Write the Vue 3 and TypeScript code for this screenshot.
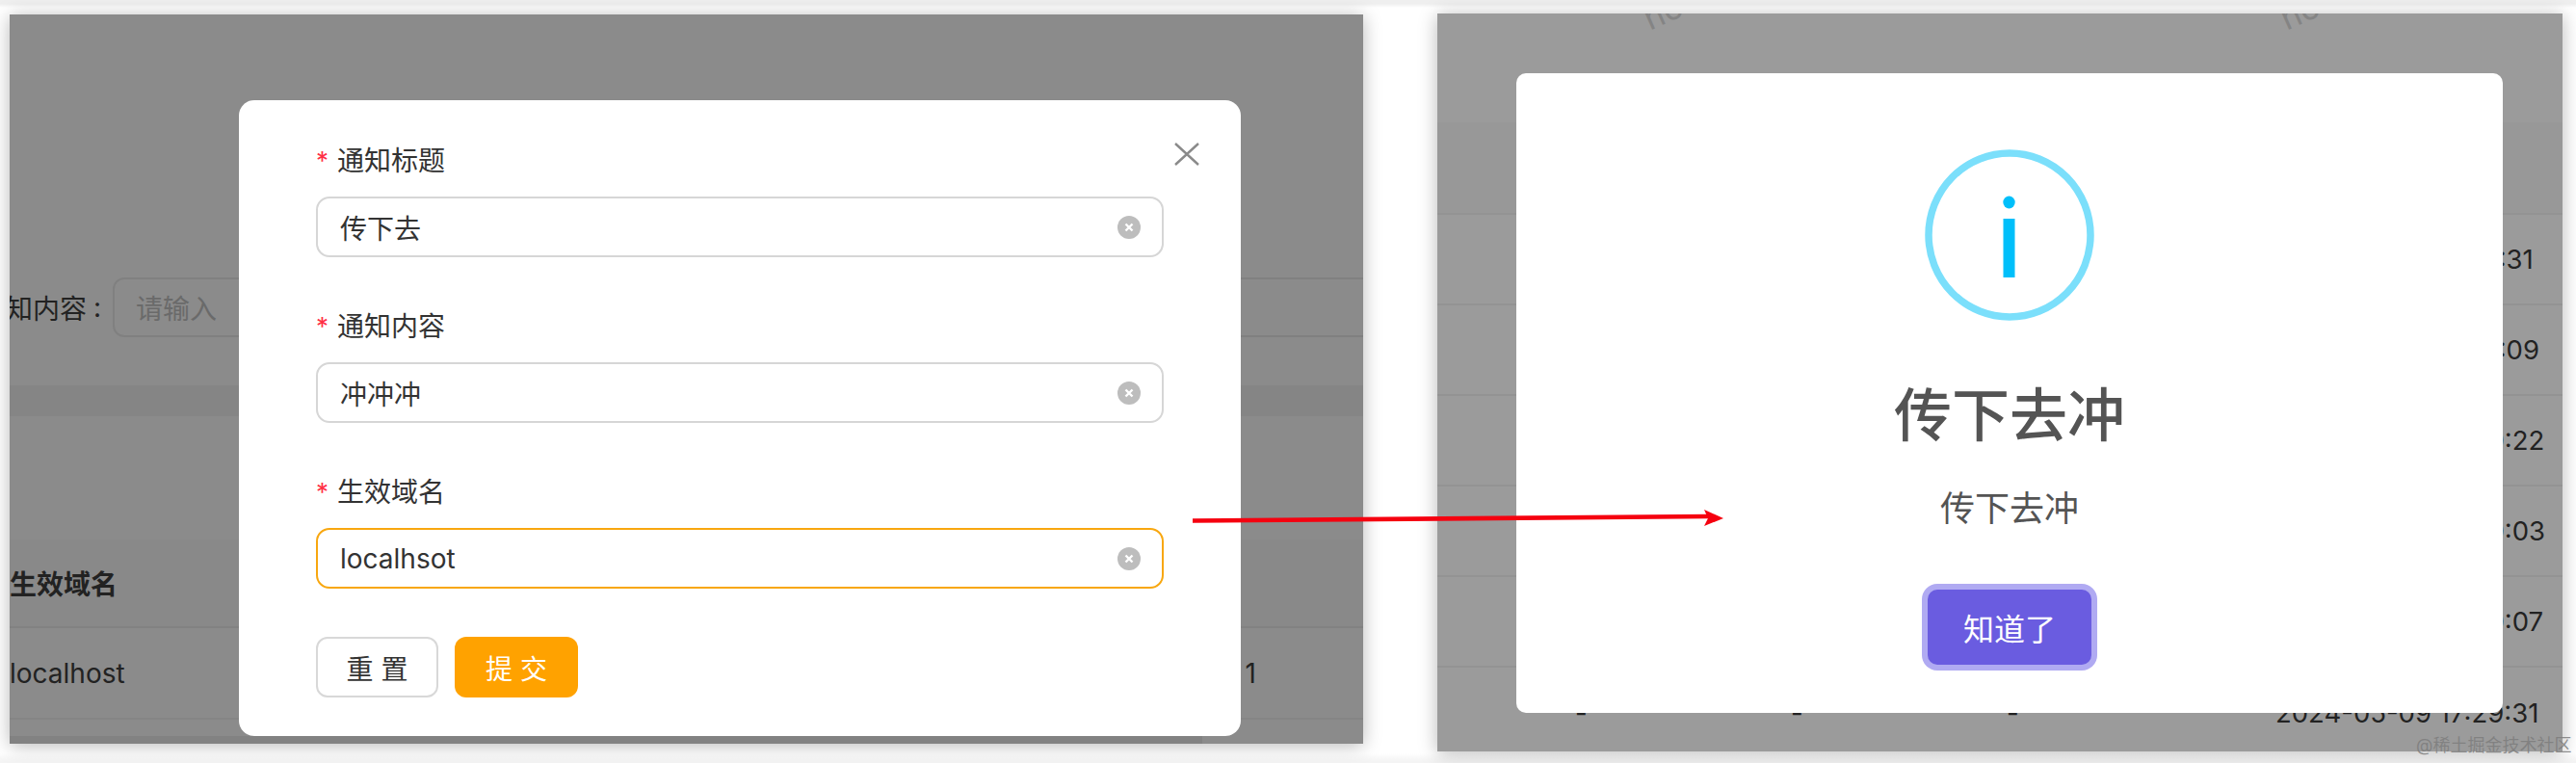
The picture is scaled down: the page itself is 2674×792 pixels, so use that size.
<script setup lang="ts">
interface Field {
  label: string
  value: string
  focused: boolean
}

const fields: Field[] = [
  { label: '通知标题', value: '传下去', focused: false },
  { label: '通知内容', value: '冲冲冲', focused: false },
  { label: '生效域名', value: 'localhsot', focused: true },
]

const times: string[] = [
  '2024-05-09 17:31:31',
  '2024-05-09 17:31:09',
  '2024-05-09 17:30:22',
  '2024-05-09 17:30:03',
  '2024-05-09 17:30:07',
]
</script>

<template>
  <div class="page">
    <section class="panel panel-left">
      <div class="filter-row">
        <span class="filter-label"><span class="filter-label-text">通知内容</span></span>
        <span class="filter-colon">:</span>
        <div class="filter-input">请输入</div>
      </div>
      <div class="band"></div>
      <div class="table-head"><span>生效域名</span></div>
      <div class="table-row">
        <span>localhost</span>
        <span>1</span>
      </div>
      <div class="foot-strip"></div>

      <div class="form-modal">
        <svg class="close" viewBox="0 0 26 24" width="26" height="24" aria-hidden="true">
          <path d="M1 1 L25 23 M25 1 L1 23" stroke="#8a8a8a" stroke-width="2.4" fill="none" />
        </svg>
        <div v-for="f in fields" :key="f.label" class="field">
          <div class="field-label"><span class="required">*</span>{{ f.label }}</div>
          <div class="input" :class="{ focused: f.focused }">
            <span>{{ f.value }}</span>
            <svg class="clear" viewBox="0 0 24 24" width="24" height="24" aria-hidden="true">
              <circle cx="12" cy="12" r="12" fill="#bdbdbd" />
              <path d="M8.5 8.5 L15.5 15.5 M15.5 8.5 L8.5 15.5" stroke="#fff" stroke-width="2.4" />
            </svg>
          </div>
        </div>
        <div class="actions">
          <div class="btn btn-reset">重 置</div>
          <div class="btn btn-submit">提 交</div>
        </div>
      </div>
    </section>

    <section class="panel panel-right">
      <span class="ghost ghost-a">hosts</span>
      <span class="ghost ghost-b">hosts</span>
      <div class="rows-head"></div>
      <div v-for="t in times" :key="t" class="time-row"><span>{{ t }}</span></div>
      <div class="last-row">
        <span>-</span>
        <span>-</span>
        <span>-</span>
        <span>2024-05-09 17:29:31</span>
      </div>

      <div class="alert-modal">
        <svg class="info" viewBox="0 0 176 178" width="176" height="178" aria-hidden="true">
          <ellipse cx="88" cy="89" rx="84" ry="85" fill="none" stroke="#7bdffb" stroke-width="7.5" />
          <ellipse cx="87.5" cy="55" rx="6.2" ry="6.5" fill="#00bffa" />
          <rect x="81.5" y="72" width="12" height="61" fill="#00bffa" />
        </svg>
        <h2 class="alert-title">传下去冲</h2>
        <p class="alert-text">传下去冲</p>
        <div class="alert-btn">知道了</div>
      </div>
    </section>

    <span class="credit">@稀土掘金技术社区</span>

    <svg class="arrow" viewBox="0 0 560 24" width="560" height="24" aria-hidden="true">
      <path d="M0 14.5 L536 10" stroke="#f5000f" stroke-width="4.6" fill="none" />
      <path d="M551 12 L531 20 L535 12 L531 3 Z" fill="#f5000f" />
    </svg>
  </div>
</template>

<style>
html,
body {
  margin: 0;
  background: #fff;
}
</style>

<style scoped>
.page {
  position: relative;
  display: flex;
  align-items: flex-start;
  width: 2674px;
  height: 792px;
  overflow: hidden;
  background: linear-gradient(#efefef 0 4px, #fff 8px, #fff 782px, #f4f4f4 790px);
  font-family: Inter, "Noto Sans CJK SC", sans-serif;
  font-size: 28px;
  color: #222;
}
.panel {
  position: relative;
  flex: none;
  overflow: hidden;
  box-shadow: 0 2px 18px rgba(0, 0, 0, 0.28);
}
.panel-left {
  width: 1405px;
  height: 757px;
  margin: 15px 0 0 10px;
  padding-top: 273px;
  box-sizing: border-box;
  background: #8b8b8b;
}
.panel-right {
  width: 1168px;
  height: 766px;
  margin: 14px 0 0 77px;
  padding-top: 113px;
  box-sizing: border-box;
  background: #9b9b9b;
}

/* dimmed page behind the form */
.filter-row {
  display: flex;
  align-items: center;
  height: 62px;
}
.filter-label {
  display: flex;
  justify-content: flex-end;
  width: 80px;
  overflow: hidden;
}
.filter-label-text {
  flex: none;
}
.filter-colon {
  width: 27px;
  padding-left: 7px;
  box-sizing: border-box;
}
.filter-input {
  display: flex;
  align-items: center;
  flex: 1;
  height: 62px;
  margin-right: -20px;
  padding-left: 22px;
  border: 2px solid #808080;
  border-radius: 12px;
  box-sizing: border-box;
  color: #6a6a6a;
}
.band {
  height: 32px;
  margin-top: 50px;
  background: #858585;
}
.table-head {
  display: flex;
  align-items: center;
  height: 92px;
  margin-top: 128px;
  border-bottom: 2px solid #828282;
  box-sizing: border-box;
  background: #898989;
  font-weight: 600;
}
.table-row {
  display: flex;
  justify-content: space-between;
  align-items: center;
  height: 95px;
  border-bottom: 2px solid #858585;
  box-sizing: border-box;
  padding-right: 111px;
}
.foot-strip {
  width: 1238px;
  height: 8px;
  margin-top: 17px;
  background: #828282;
}

/* form dialog */
.form-modal {
  position: absolute;
  left: 238px;
  top: 89px;
  width: 1040px;
  height: 660px;
  padding: 46px 80px 0 80px;
  box-sizing: border-box;
  border-radius: 16px;
  background: #fff;
  color: #333;
}
.close {
  position: absolute;
  left: 971px;
  top: 44px;
}
.field {
  height: 172px;
}
.field-label {
  display: flex;
  align-items: center;
  height: 34px;
  color: #333;
  line-height: 34px;
}
.required {
  width: 22px;
  color: #ff3045;
  font-size: 26px;
}
.input {
  display: flex;
  justify-content: space-between;
  align-items: center;
  height: 63px;
  margin-top: 20px;
  padding: 0 22px 0 23px;
  border: 2px solid #d6d6d6;
  border-radius: 14px;
  box-sizing: border-box;
  color: #333;
}
.input.focused {
  border-color: #f8a70f;
}
.actions {
  display: flex;
  gap: 17px;
  margin-top: -5px;
}
.btn {
  display: flex;
  justify-content: center;
  align-items: center;
  width: 127px;
  height: 63px;
  border-radius: 12px;
  box-sizing: border-box;
}
.btn-reset {
  border: 2px solid #d8d8d8;
  color: #333;
}
.btn-submit {
  width: 128px;
  background: #ffa200;
  color: #fff;
}

/* dimmed page behind the alert */
.rows-head {
  height: 96px;
  border-bottom: 2px solid #939393;
  box-sizing: border-box;
  background: #989898;
}
.time-row {
  display: flex;
  align-items: center;
  height: 94px;
  padding-left: 870px;
  border-bottom: 2px solid #939393;
  box-sizing: border-box;
  font-size: 27.5px;
}
.last-row {
  display: grid;
  grid-template-columns: 224px 224px 279px 1fr;
  align-items: center;
  height: 94px;
  padding-left: 143px;
  box-sizing: border-box;
  font-size: 27.5px;
  white-space: nowrap;
}
.ghost {
  position: absolute;
  top: -32px;
  color: #848484;
  font-size: 34px;
  transform: rotate(-24deg);
}
.ghost-a {
  left: 212px;
}
.ghost-b {
  left: 873px;
}
.credit {
  position: absolute;
  left: 2508px;
  top: 762px;
  color: rgba(125, 125, 125, 0.85);
  font-size: 18px;
  line-height: 24px;
  white-space: nowrap;
}

/* alert dialog */
.alert-modal {
  position: absolute;
  left: 82px;
  top: 62px;
  display: flex;
  flex-direction: column;
  align-items: center;
  width: 1024px;
  height: 664px;
  padding-top: 79px;
  box-sizing: border-box;
  border-radius: 10px;
  background: #fff;
  color: #545454;
}
.info {
  flex: none;
  margin-right: 1px;
}
.alert-title {
  margin: 62px 0 0;
  font-size: 60px;
  font-weight: 500;
  line-height: 72px;
}
.alert-text {
  margin: 39px 0 0;
  font-size: 36px;
  font-weight: 400;
  line-height: 44px;
}
.alert-btn {
  display: flex;
  justify-content: center;
  align-items: center;
  flex: none;
  width: 170px;
  height: 78px;
  margin-top: 62px;
  border-radius: 10px;
  background: #6a5ce0;
  box-shadow: 0 0 0 6px #b0aaf2;
  color: #fff;
  font-size: 32px;
}

.arrow {
  position: absolute;
  left: 1238px;
  top: 526px;
}
</style>
